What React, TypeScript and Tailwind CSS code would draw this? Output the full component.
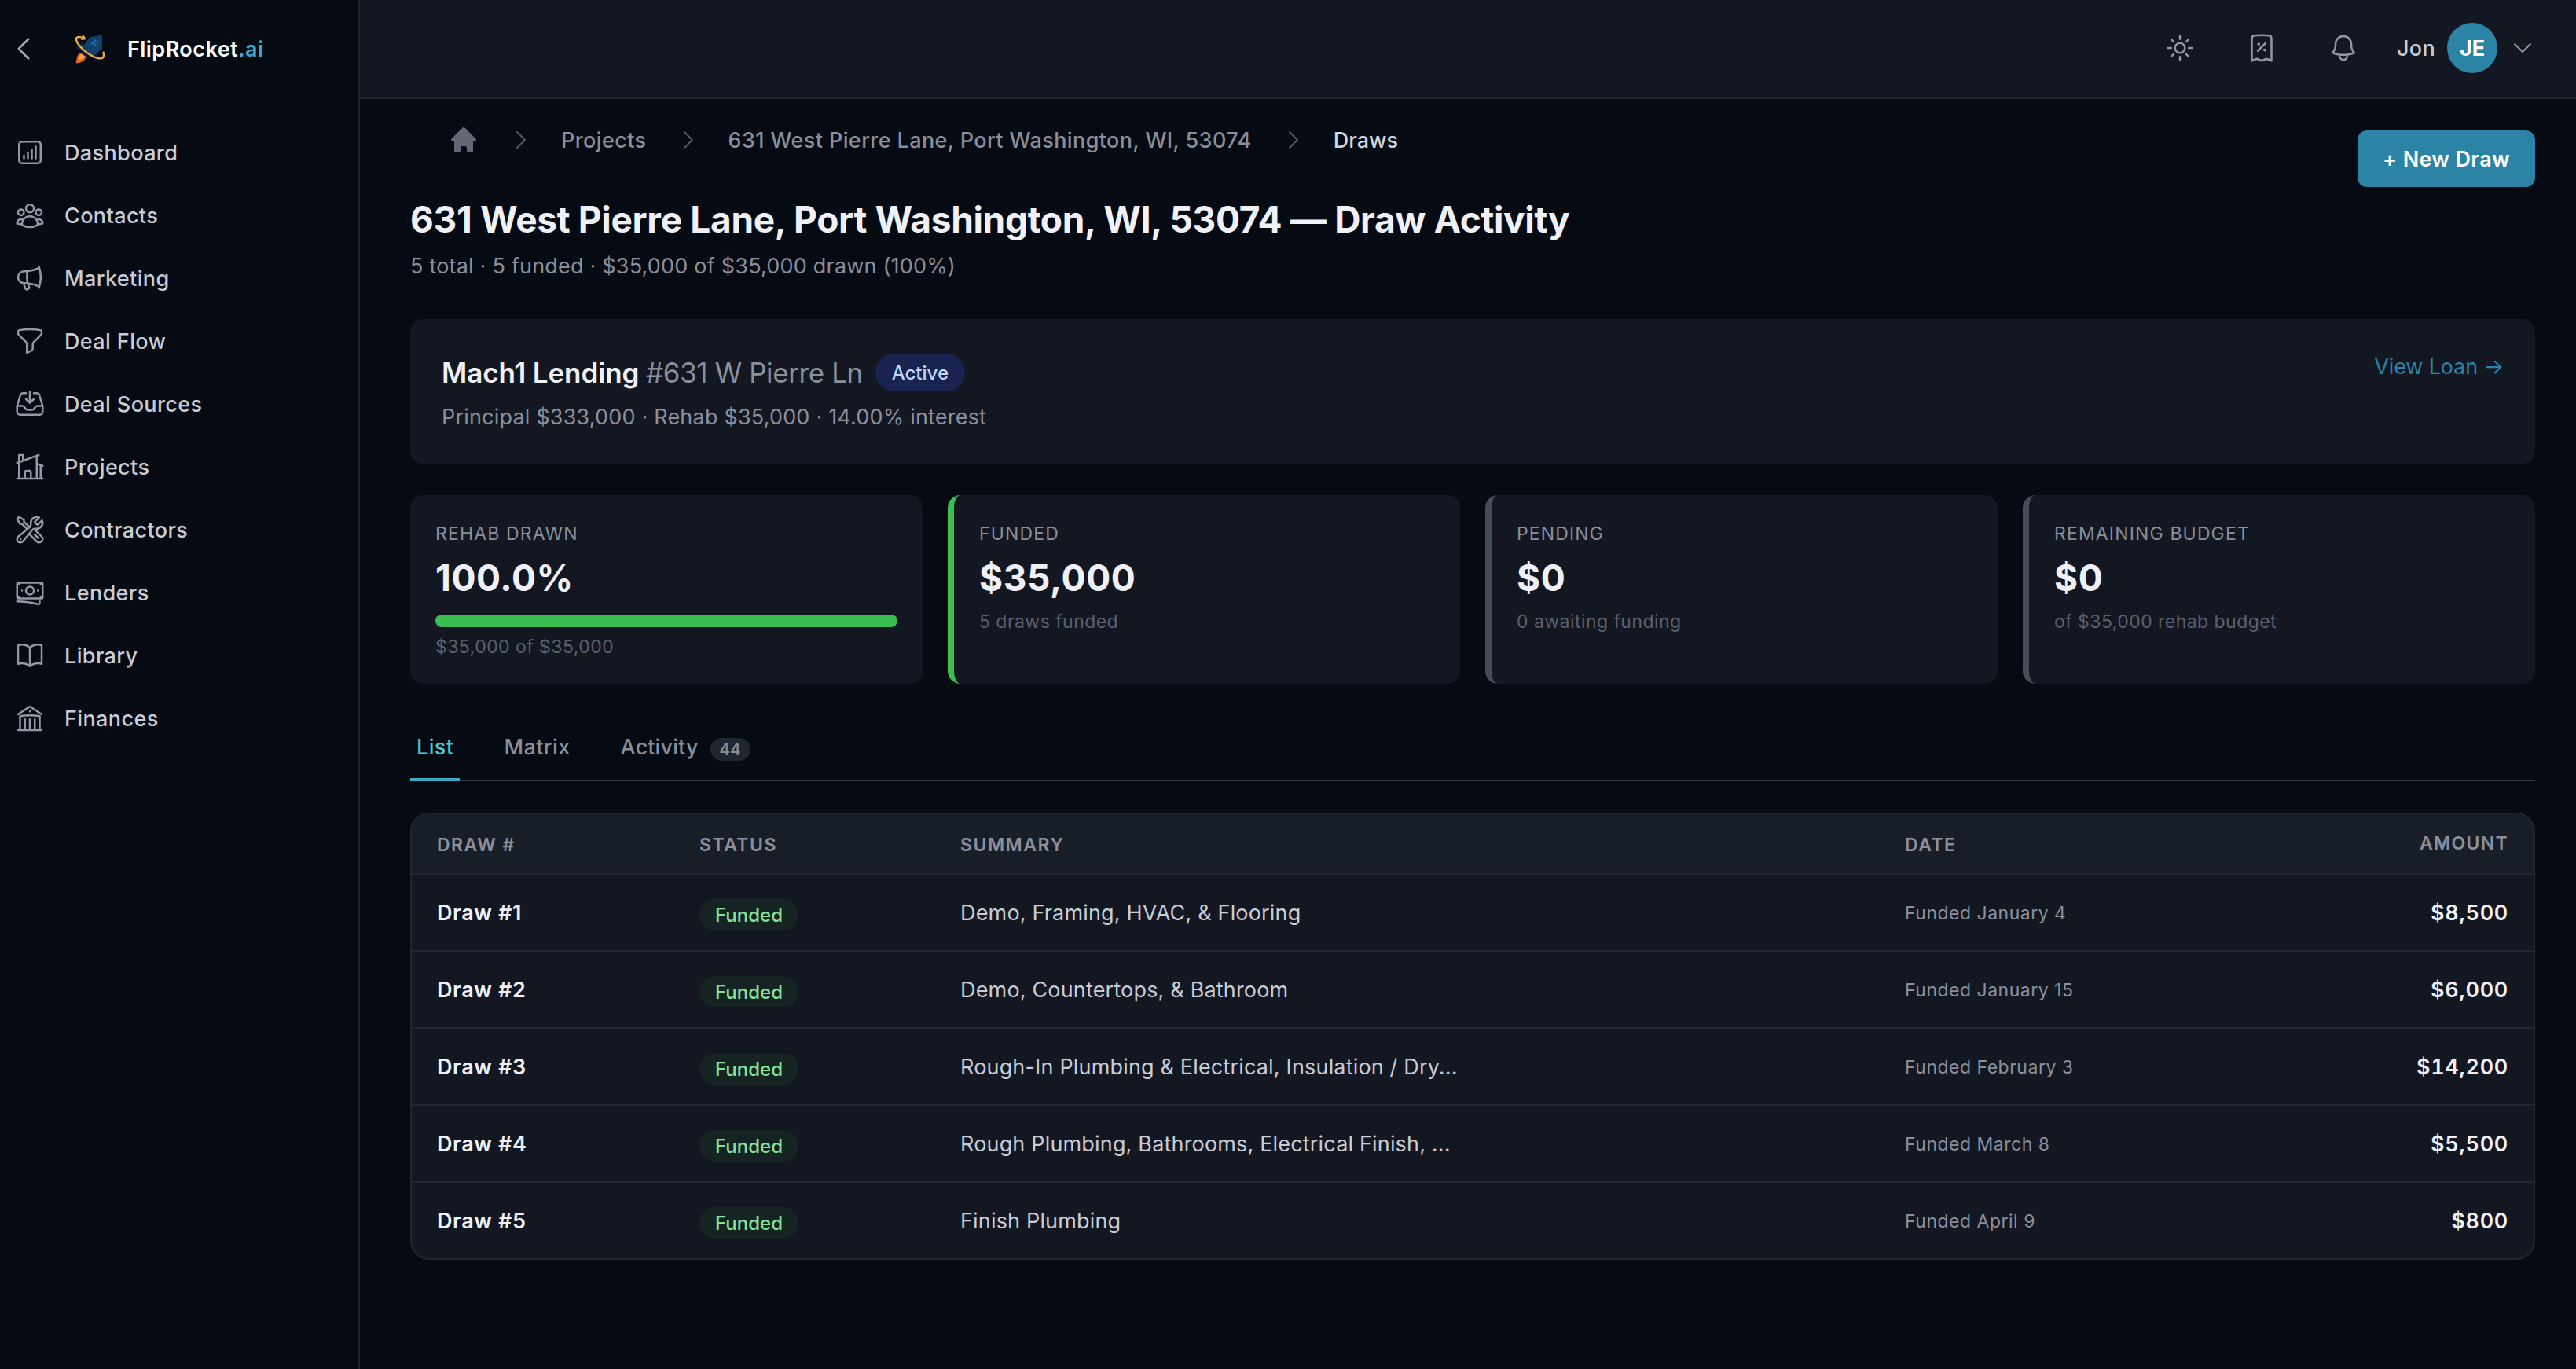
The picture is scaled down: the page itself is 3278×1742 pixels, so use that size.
import type { ReactNode } from 'react'
import type { IconType } from 'react-icons'
import { HiHome } from 'react-icons/hi'
import {
  HiOutlineBanknotes,
  HiOutlineBell,
  HiOutlineBookOpen,
  HiOutlineBuildingLibrary,
  HiOutlineChartBarSquare,
  HiOutlineChevronDown,
  HiOutlineChevronLeft,
  HiOutlineChevronRight,
  HiOutlineFunnel,
  HiOutlineHomeModern,
  HiOutlineInboxArrowDown,
  HiOutlineMegaphone,
  HiOutlineReceiptPercent,
  HiOutlineSun,
  HiOutlineUserGroup,
  HiOutlineWrenchScrewdriver,
} from 'react-icons/hi2'

const NAV_ITEMS: { label: string; icon: IconType }[] = [
  { label: 'Dashboard', icon: HiOutlineChartBarSquare },
  { label: 'Contacts', icon: HiOutlineUserGroup },
  { label: 'Marketing', icon: HiOutlineMegaphone },
  { label: 'Deal Flow', icon: HiOutlineFunnel },
  { label: 'Deal Sources', icon: HiOutlineInboxArrowDown },
  { label: 'Projects', icon: HiOutlineHomeModern },
  { label: 'Contractors', icon: HiOutlineWrenchScrewdriver },
  { label: 'Lenders', icon: HiOutlineBanknotes },
  { label: 'Library', icon: HiOutlineBookOpen },
  { label: 'Finances', icon: HiOutlineBuildingLibrary },
]

const DRAWS = [
  { id: 1, summary: 'Demo, Framing, HVAC, & Flooring', date: 'January 4', amount: '$8,500' },
  { id: 2, summary: 'Demo, Countertops, & Bathroom', date: 'January 15', amount: '$6,000' },
  { id: 3, summary: 'Rough-In Plumbing & Electrical, Insulation / Dry...', date: 'February 3', amount: '$14,200' },
  { id: 4, summary: 'Rough Plumbing, Bathrooms, Electrical Finish, ...', date: 'March 8', amount: '$5,500' },
  { id: 5, summary: 'Finish Plumbing', date: 'April 9', amount: '$800' },
]

const ADDRESS = '631 West Pierre Lane, Port Washington, WI, 53074'

function Logo() {
  return (
    <svg viewBox="40 36 128 120" className="h-10 w-[43px]">
      {/* Rocket body and fins */}
      <path d="M150 43 L104 52 L76 86 L112 128 L151 96 Z" fill="#153f6b" />
      <path d="M76 72 L50 94 L76 98 Z" fill="#0e2f55" />
      <path d="M112 128 L134 112 L140 134 L122 142 Z" fill="#0c1c33" />
      <path d="M58 92 L70 84 L104 118 L96 134 Z" fill="#0c1c33" />
      {/* Window */}
      <g fill="#1f6cb0">
        <rect x="118" y="61" width="9" height="9" rx="1" transform="rotate(35 122 66)" />
        <rect x="128" y="66" width="9" height="9" rx="1" transform="rotate(35 132 71)" />
        <rect x="109" y="70" width="9" height="9" rx="1" transform="rotate(35 113 75)" />
        <rect x="119" y="76" width="9" height="9" rx="1" transform="rotate(35 123 80)" />
      </g>
      {/* Exhaust flame */}
      <path d="M66 110 C54 120 54 132 50 151 C64 150 84 148 90 126 Z" fill="#e8632c" />
      <path d="M70 116 C62 124 62 132 60 140 C72 136 80 134 84 126 Z" fill="#ffa63a" />
      {/* Orbit arrow */}
      <path
        d="M80 53 C64 50 50 50 51 60 C54 84 104 126 138 133 C154 135 160 128 155 110"
        fill="none"
        stroke="#f0ae45"
        strokeWidth="7"
        strokeLinecap="round"
      />
      <path d="M78 41 L90 61 L69 63 Z" fill="#f0ae45" />
    </svg>
  )
}

function Sidebar() {
  return (
    <aside className="flex w-[458px] shrink-0 flex-col border-r-2 border-[#1c222c]">
      <div className="flex h-[124px] items-center pl-[10px]">
        <HiOutlineChevronLeft className="size-10 text-[#a3a7b2]" />
        <div className="ml-[43px] flex items-center gap-[26px]">
          <Logo />
          <span className="pt-[2px] text-[27px] font-semibold tracking-[0.45px] text-white">
            FlipRocket<span className="text-[#3fa9c9]">.ai</span>
          </span>
        </div>
      </div>

      <nav className="mt-[30px] flex flex-col">
        {NAV_ITEMS.map(({ label, icon: Icon }) => (
          <a key={label} className="flex h-20 items-center gap-6 pl-[18px]">
            <Icon className="size-10 text-[#9498a4]" />
            <span className="pt-[2px] text-[27px] font-medium tracking-[0.38px] text-[#c9ccd5]">{label}</span>
          </a>
        ))}
      </nav>
    </aside>
  )
}

function TopBar() {
  return (
    <header className="flex h-[126px] items-center justify-end border-b-2 border-[#20262f] bg-[#131722] pr-[52px] pb-[2px]">
      <div className="flex items-center gap-16 text-[#9498a4]">
        <HiOutlineSun className="size-10" />
        <HiOutlineReceiptPercent className="size-10" />
        <HiOutlineBell className="size-10" />
      </div>
      <span className="ml-12 pt-[2px] text-[27px] font-medium tracking-[0.3px] text-[#c9ccd5]">Jon</span>
      <div className="ml-[15px] flex size-16 items-center justify-center rounded-full bg-[#2b84a6] pt-[2px] text-[27px] font-bold text-white">
        JE
      </div>
      <HiOutlineChevronDown className="ml-4 size-8 text-[#9498a4]" />
    </header>
  )
}

function BreadcrumbSeparator() {
  return <HiOutlineChevronRight className="-mr-[1px] ml-[1px] size-8 text-[#535966]" />
}

function Breadcrumbs() {
  return (
    <nav className="flex h-10 items-center gap-9 pl-12 text-[27px] font-medium tracking-[0.4px] text-[#8b8f9b]">
      <HiHome className="size-10 text-[#636777]" />
      <BreadcrumbSeparator />
      <span className="pt-[2px]">Projects</span>
      <BreadcrumbSeparator />
      <span className="pt-[2px]">{ADDRESS}</span>
      <BreadcrumbSeparator />
      <span className="pt-[2px] tracking-[0.1px] text-[#d3d6de]">Draws</span>
    </nav>
  )
}

function LoanCard() {
  return (
    <section className="mt-[47px] flex h-[184px] items-start justify-between rounded-2xl bg-[#131722] p-10">
      <div>
        <div className="mt-1 flex h-12 items-center gap-4">
          <h2 className="text-[35px] font-semibold tracking-[-0.1px] text-[#eff1f7]">
            Mach1 Lending{' '}
            <span className="font-normal tracking-[-0.4px] text-[#8b8f9b]">#631 W Pierre Ln</span>
          </h2>
          <span className="flex h-12 w-[114px] items-center justify-center rounded-full bg-[#18244f] pt-[1px] text-2xl font-medium text-[#bfd7fb]">
            Active
          </span>
        </div>
        <p className="mt-[13px] text-[27px] leading-10 tracking-[0.19px] text-[#8b8f9b]">
          Principal $333,000 · Rehab $35,000 · 14.00% interest
        </p>
      </div>
      <a className="mt-[1px] text-[27px] leading-10 tracking-[-0.15px] text-[#2b84a6]">View Loan →</a>
    </section>
  )
}

interface StatCardProps {
  label: string
  value: string
  note: string
  accent?: string
  children?: ReactNode
}

function StatCard({ label, value, note, accent = '', children }: StatCardProps) {
  return (
    <div className={`h-60 rounded-2xl bg-[#131722] p-8 ${accent}`}>
      <p className="pt-[1px] text-[23px] leading-8 tracking-[1.15px] text-[#8b8f9b] uppercase">{label}</p>
      <p className="mt-3 text-[46px] leading-14 font-bold tracking-[0.6px] text-[#eff1f7]">{value}</p>
      {children}
      <p className={`text-[23px] leading-8 tracking-[0.45px] text-[#5b606c] ${children ? 'mt-[9px]' : 'mt-3'}`}>
        {note}
      </p>
    </div>
  )
}

function Tabs() {
  return (
    <div className="mt-10 flex h-[84px] gap-12 border-b-2 border-[#333845] text-[27px] font-medium tracking-[0.4px] text-[#8b8f9b]">
      <div className="-mb-[2px] flex items-center border-b-4 border-[#38a9c7] px-2 pt-[2px] text-[#4cc3d9]">List</div>
      <div className="-mb-[2px] flex items-center border-b-4 border-transparent px-2 pt-[2px]">Matrix</div>
      <div className="-mb-[2px] flex items-center border-b-4 border-transparent px-2 pt-[2px] tracking-[0.1px]">
        Activity
        <span className="mt-[5px] ml-[15px] flex h-[29px] w-[51px] items-center justify-center rounded-full bg-[#1f2630] text-[21px] tracking-normal">
          44
        </span>
      </div>
    </div>
  )
}

function DrawsTable() {
  return (
    <div className="mt-10 overflow-hidden rounded-3xl border-2 border-[#20272f] bg-[#131722]">
      <div className="grid h-[77px] grid-cols-[334px_332px_1202px_minmax(0,1fr)_200px] items-center border-b-2 border-[#20272f] bg-[#181e28] px-8 text-[23px] font-semibold tracking-[1.5px] text-[#8b8f9b]">
        <span className="pt-[3px]">DRAW #</span>
        <span className="pt-[3px]">STATUS</span>
        <span className="pt-[3px]">SUMMARY</span>
        <span className="pt-[3px]">DATE</span>
        <span className="text-right tracking-[1.3px]">AMOUNT</span>
      </div>
      {DRAWS.map(draw => (
        <div
          key={draw.id}
          className="grid h-[98px] grid-cols-[334px_332px_1202px_minmax(0,1fr)_200px] items-center border-b-2 border-[#20272f] px-8 text-[27px] last:h-24 last:border-b-0"
        >
          <span className="pt-[2px] font-semibold tracking-[0.6px] text-[#eff1f7]">Draw #{draw.id}</span>
          <span className="mt-[6px] flex h-10 w-[126px] items-center justify-center rounded-full bg-[#152422] pt-[1px] text-2xl font-medium text-[#86e29b]">
            Funded
          </span>
          <span className="pt-[2px] tracking-[0.17px] text-[#c9ccd5]">{draw.summary}</span>
          <span className="pt-[2px] text-[23px] tracking-[0.5px] text-[#8b8f9b]">Funded {draw.date}</span>
          <span className="pt-[2px] text-right font-semibold tracking-[0.7px] text-[#eff1f7] tabular-nums">
            {draw.amount}
          </span>
        </div>
      ))}
    </div>
  )
}

export default function App() {
  return (
    <div className="flex h-screen w-full overflow-hidden bg-[#060a13] font-['Inter',sans-serif]">
      <Sidebar />
      <div className="flex min-w-0 flex-1 flex-col">
        <TopBar />
        <main className="flex-1 pt-8 pr-[52px] pl-16">
          <div className="flex items-start justify-between">
            <div>
              <Breadcrumbs />
              <h1 className="mt-[53px] text-[46px] leading-14 font-bold tracking-[-0.31px] text-[#eff1f7]">
                {ADDRESS} — Draw Activity
              </h1>
              <p className="mt-3 text-[27px] leading-10 tracking-[0.2px] text-[#8b8f9b]">
                5 total · 5 funded · $35,000 of $35,000 drawn (100%)
              </p>
            </div>
            <button className="mt-2 flex h-[72px] w-[226px] items-center justify-center rounded-xl bg-[#2b84a6] pt-[2px] text-[27px] font-semibold tracking-[0.34px] text-white">
              + New Draw
            </button>
          </div>

          <LoanCard />

          <section className="mt-10 grid grid-cols-4 gap-8">
            <StatCard label="Rehab Drawn" value="100.0%" note="$35,000 of $35,000">
              <div className="mt-[19px] h-4 rounded-full bg-[#3bbd52]" />
            </StatCard>
            <StatCard label="Funded" value="$35,000" note="5 draws funded" accent="border-l-8 border-[#3bbd52]" />
            <StatCard label="Pending" value="$0" note="0 awaiting funding" accent="border-l-8 border-[#454d59]" />
            <StatCard
              label="Remaining Budget"
              value="$0"
              note="of $35,000 rehab budget"
              accent="border-l-8 border-[#454d59]"
            />
          </section>

          <Tabs />
          <DrawsTable />
        </main>
      </div>
    </div>
  )
}
